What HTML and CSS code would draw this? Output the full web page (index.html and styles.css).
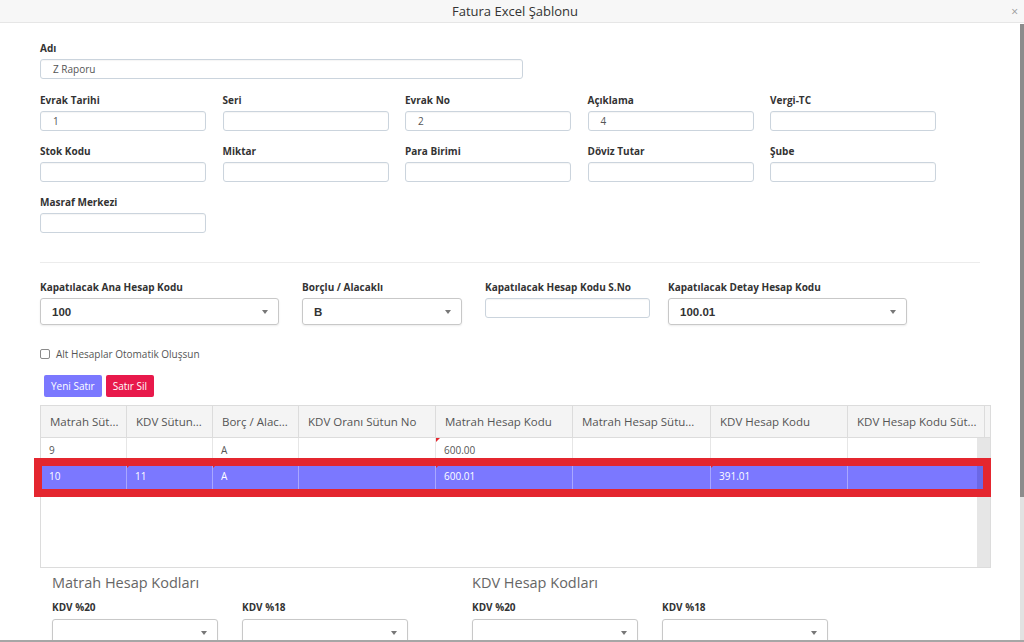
FILE: index.html
```html
<!DOCTYPE html>
<html lang="tr">
<head>
    <meta charset="UTF-8">
    <meta name="viewport" content="width=device-width, initial-scale=1.0">
    <title>Fatura Excel Şablonu</title>
    <link rel="stylesheet" href="styles.css">
</head>
<body>
    <div class="modal">
        <div class="modal-header">
            <span></span>
            <span class="modal-title">Fatura Excel Şablonu</span>
            <span class="close">×</span>
        </div>

        <div class="modal-body">
            <div class="content">
                <div class="field name-field">
                    <label>Adı</label>
                    <div class="input">Z Raporu</div>
                </div>

                <div class="form-grid">
                    <div class="field"><label>Evrak Tarihi</label><div class="input">1</div></div>
                    <div class="field"><label>Seri</label><div class="input"></div></div>
                    <div class="field"><label>Evrak No</label><div class="input">2</div></div>
                    <div class="field"><label>Açıklama</label><div class="input">4</div></div>
                    <div class="field"><label>Vergi-TC</label><div class="input"></div></div>
                    <div class="field"><label>Stok Kodu</label><div class="input"></div></div>
                    <div class="field"><label>Miktar</label><div class="input"></div></div>
                    <div class="field"><label>Para Birimi</label><div class="input"></div></div>
                    <div class="field"><label>Döviz Tutar</label><div class="input"></div></div>
                    <div class="field"><label>Şube</label><div class="input"></div></div>
                    <div class="field"><label>Masraf Merkezi</label><div class="input"></div></div>
                </div>

                <div class="divider"></div>

                <div class="acc-row">
                    <div class="field acc-main">
                        <label>Kapatılacak Ana Hesap Kodu</label>
                        <div class="select"><span>100</span><i class="caret"></i></div>
                    </div>
                    <div class="field acc-side">
                        <label>Borçlu / Alacaklı</label>
                        <div class="select"><span>B</span><i class="caret"></i></div>
                    </div>
                    <div class="field acc-no">
                        <label>Kapatılacak Hesap Kodu S.No</label>
                        <div class="input"></div>
                    </div>
                    <div class="field acc-detail">
                        <label>Kapatılacak Detay Hesap Kodu</label>
                        <div class="select"><span>100.01</span><i class="caret"></i></div>
                    </div>
                </div>

                <div class="check-row">
                    <span class="checkbox"></span>
                    <span>Alt Hesaplar Otomatik Oluşsun</span>
                </div>

                <div class="actions">
                    <button class="btn btn-add">Yeni Satır</button>
                    <button class="btn btn-del">Satır Sil</button>
                </div>

                <div class="grid">
                    <div class="grid-head">
                        <div class="th c1">Matrah Süt...</div>
                        <div class="th c2">KDV Sütun...</div>
                        <div class="th c3">Borç / Alac...</div>
                        <div class="th c4">KDV Oranı Sütun No</div>
                        <div class="th c5">Matrah Hesap Kodu</div>
                        <div class="th c6">Matrah Hesap Sütu...</div>
                        <div class="th c7">KDV Hesap Kodu</div>
                        <div class="th c8">KDV Hesap Kodu Süt...</div>
                        <div class="th filler"></div>
                    </div>
                    <div class="grid-body">
                        <div class="grid-rows">
                            <div class="tr">
                                <div class="td c1">9</div>
                                <div class="td c2"></div>
                                <div class="td c3">A</div>
                                <div class="td c4"></div>
                                <div class="td c5 dirty">600.00</div>
                                <div class="td c6"></div>
                                <div class="td c7"></div>
                                <div class="td c8"></div>
                            </div>
                            <div class="tr selected">
                                <div class="td c1">10</div>
                                <div class="td c2 dirty">11</div>
                                <div class="td c3 dirty">A</div>
                                <div class="td c4"></div>
                                <div class="td c5 dirty">600.01</div>
                                <div class="td c6"></div>
                                <div class="td c7 dirty">391.01</div>
                                <div class="td c8"></div>
                            </div>
                        </div>
                        <div class="grid-track"></div>
                    </div>
                    <div class="mark"></div>
                </div>

                <div class="codes">
                    <div class="code-group">
                        <h3>Matrah Hesap Kodları</h3>
                        <div class="code-fields">
                            <div class="field"><label>KDV %20</label><div class="select"><span></span><i class="caret"></i></div></div>
                            <div class="field"><label>KDV %18</label><div class="select"><span></span><i class="caret"></i></div></div>
                        </div>
                    </div>
                    <div class="code-group">
                        <h3>KDV Hesap Kodları</h3>
                        <div class="code-fields">
                            <div class="field"><label>KDV %20</label><div class="select"><span></span><i class="caret"></i></div></div>
                            <div class="field"><label>KDV %18</label><div class="select"><span></span><i class="caret"></i></div></div>
                        </div>
                    </div>
                </div>
            </div>

            <div class="vscroll"><div class="thumb"></div></div>
        </div>
    </div>
</body>
</html>
```

FILE: styles.css
```css
* {
    margin: 0;
    padding: 0;
    box-sizing: border-box;
}

body {
    font-family: 'Open Sans', 'Noto Sans', sans-serif;
    background: #fff;
    color: #333;
}

.modal {
    height: 642px;
    display: flex;
    flex-direction: column;
    overflow: hidden;
    border-bottom: 2px solid #a6a6a6;
}

.modal-header {
    height: 23px;
    flex: none;
    display: grid;
    grid-template-columns: 1fr auto 1fr;
    align-items: center;
    background: #f7f7f7;
    border-bottom: 1px solid #e6e6e6;
}

.modal-title {
    font-size: 13px;
    color: #333;
    padding-left: 6px;
}

.close {
    justify-self: end;
    margin-right: 6px;
    font-size: 12px;
    color: #999;
}

.modal-body {
    flex: 1;
    min-height: 0;
    display: flex;
    overflow: hidden;
}

.content {
    flex: 1;
    min-width: 0;
    padding: 18px 28px 0 40px;
}

.vscroll {
    width: 4px;
    flex: none;
    margin-top: 1px;
    background: #e2e2e2;
}

.thumb {
    height: 473px;
    background: #8c8c8c;
}

/* form fields */
.field label {
    display: block;
    font-size: 10px;
    font-weight: 700;
    line-height: 14px;
    color: #333;
    margin-bottom: 4px;
}

.input {
    height: 20px;
    border: 1px solid #cbd4dd;
    border-radius: 3px;
    box-shadow: inset 0 1px 1px rgba(0, 0, 0, 0.04);
    padding: 0 12px;
    font-size: 10px;
    line-height: 18px;
    color: #555;
}

.name-field {
    width: 483px;
    margin-bottom: 14px;
}

.form-grid {
    display: grid;
    grid-template-columns: repeat(5, 166px);
    column-gap: 16.5px;
    row-gap: 13px;
}

.divider {
    height: 1px;
    background: #ececec;
    margin: 29px 12px 0 0;
}

.acc-row {
    display: flex;
    margin-top: 17px;
}

.acc-main { width: 239px; margin-right: 23px; }
.acc-side { width: 160px; margin-right: 23px; }
.acc-no { width: 165px; margin-right: 18px; }
.acc-detail { width: 239px; }

.select {
    height: 27px;
    border: 1px solid #c8c8c8;
    border-radius: 3px;
    box-shadow: 0 1px 2px rgba(0, 0, 0, 0.08);
    display: flex;
    align-items: center;
    justify-content: space-between;
    padding: 0 10px 0 11px;
    font-family: 'Liberation Sans', Arial, sans-serif;
    font-size: 11.5px;
    font-weight: 700;
    color: #333;
}

.caret {
    width: 0;
    height: 0;
    border-left: 3px solid transparent;
    border-right: 3px solid transparent;
    border-top: 4px solid #777;
}

.check-row {
    display: flex;
    align-items: center;
    height: 14px;
    margin-top: 22px;
    font-size: 10px;
    color: #555;
}

.checkbox {
    width: 10px;
    height: 10px;
    border: 1px solid #8a8a8a;
    border-radius: 2px;
    margin-right: 6px;
}

.actions {
    display: flex;
    gap: 4px;
    margin: 14px 0 0 4px;
}

.btn {
    height: 22px;
    padding: 0 7px;
    border: none;
    border-radius: 2px;
    font-family: 'Open Sans', sans-serif;
    font-size: 10px;
    color: #fff;
}

.btn-add { background: #7b78ff; }
.btn-del { background: #e8194b; }

/* grid */
.grid {
    position: relative;
    width: 951px;
    height: 163px;
    margin-top: 8px;
    border: 1px solid #dcdcdc;
}

.grid-head {
    display: flex;
    height: 32px;
    background: #f4f4f4;
    border-bottom: 1px solid #dcdcdc;
}

.th {
    flex: none;
    border-right: 1px solid #dcdcdc;
    padding: 0 9px;
    font-size: 11.5px;
    line-height: 31px;
    color: #555;
    white-space: nowrap;
    overflow: hidden;
}

.c1, .c2, .c3 { width: 86px; }
.c4, .c5, .c7, .c8 { width: 137px; }
.c6 { width: 138px; }
.th.filler { width: 5px; border-right: none; padding: 0; }

.grid-body {
    display: flex;
    height: 129px;
}

.grid-rows {
    flex: 1;
    min-width: 0;
    overflow: hidden;
}

.grid-track {
    width: 13px;
    flex: none;
    background: linear-gradient(#e6e6e6 26px, #6b68e6 26px, #6b68e6 52px, #e6e6e6 52px);
}

.tr {
    display: flex;
    height: 26px;
    border-bottom: 1px solid #ededed;
}

.td {
    position: relative;
    flex: none;
    border-right: 1px solid #e6e6e6;
    padding: 0 8px;
    font-size: 10px;
    line-height: 25px;
    color: #555;
    white-space: nowrap;
}

.tr.selected {
    background: #7b78ff;
}

.tr.selected .td {
    color: #fff;
    border-right-color: rgba(255, 255, 255, 0.35);
}

.td.dirty::before {
    content: '';
    position: absolute;
    left: 0;
    top: 0;
    border-top: 4px solid #e3262d;
    border-right: 4px solid transparent;
}

.mark {
    position: absolute;
    left: -7px;
    top: 52px;
    width: 957px;
    height: 39px;
    border: 8px solid #e4262f;
}

/* account code selects */
.codes {
    display: flex;
    margin-top: 5px;
}

.code-group {
    width: 420px;
    padding-left: 12px;
}

.code-group h3 {
    font-size: 14.5px;
    font-weight: 400;
    line-height: 20px;
    color: #666;
    margin-bottom: 7px;
}

.code-fields {
    display: flex;
    gap: 24px;
}

.code-fields .field {
    width: 166px;
}

.code-fields .field label {
    margin-bottom: 5px;
}
```
